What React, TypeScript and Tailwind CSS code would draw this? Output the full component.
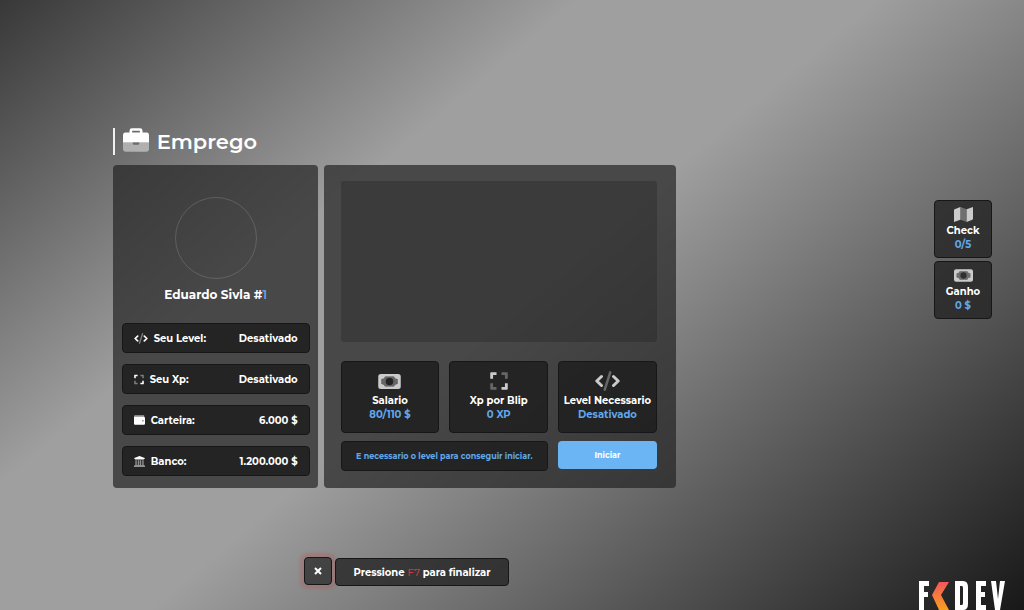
import type { ReactNode } from "react";

type IconProps = { className?: string };

function CodeIcon({ className }: IconProps) {
  return (
    <svg viewBox="0 0 640 512" className={className} aria-hidden="true">
      <path opacity=".4" stroke="currentColor" strokeWidth="64" strokeLinecap="round" d="M390 34L250 478" />
      <path fill="none" stroke="currentColor" strokeWidth="76" strokeLinecap="round" strokeLinejoin="round" d="M166 142L46 256l120 114M474 142l120 114-120 114" />
    </svg>
  );
}

function ExpandIcon({ className }: IconProps) {
  return (
    <svg viewBox="0 0 448 512" className={className} fill="currentColor" aria-hidden="true">
      <path d="M24 32h136v72H72v96H0V56a24 24 0 0 1 24-24zM448 312v144a24 24 0 0 1-24 24H288v-72h88v-96z" />
      <path opacity=".4" d="M288 32h136a24 24 0 0 1 24 24v144h-72v-96h-88zM0 312h72v96h88v72H24a24 24 0 0 1-24-24z" />
    </svg>
  );
}

function MoneyIcon({ className }: IconProps) {
  return (
    <svg viewBox="0 0 576 384" className={className} fill="currentColor" aria-hidden="true">
      <path fillRule="evenodd" d="M64 0h448a64 64 0 0 1 64 64v256a64 64 0 0 1-64 64H64a64 64 0 0 1-64-64V64A64 64 0 0 1 64 0zm112 64a96 96 0 0 1-96 64v128a96 96 0 0 1 96 64h224a96 96 0 0 1 96-64V128a96 96 0 0 1-96-64z" />
      <path opacity=".4" fillRule="evenodd" d="M176 64h224a96 96 0 0 0 96 64v128a96 96 0 0 0-96 64H176a96 96 0 0 0-96-64V128a96 96 0 0 0 96-64zm112 32a96 96 0 1 0 0 192 96 96 0 0 0 0-192z" />
    </svg>
  );
}

function WalletIcon({ className }: IconProps) {
  return (
    <svg viewBox="0 0 512 448" className={className} fill="currentColor" aria-hidden="true">
      <path opacity=".6" d="M48 0h400a32 32 0 0 1 32 32v64H0V48A48 48 0 0 1 48 0z" />
      <path fillRule="evenodd" d="M0 80h464a48 48 0 0 1 48 48v272a48 48 0 0 1-48 48H48a48 48 0 0 1-48-48zm416 152a32 32 0 1 0 0 64 32 32 0 0 0 0-64z" />
    </svg>
  );
}

function BankIcon({ className }: IconProps) {
  return (
    <svg viewBox="0 0 512 512" className={className} fill="currentColor" aria-hidden="true">
      <path d="M256 0l240 96v48h-32v24H48v-24H16V96z" />
      <path opacity=".5" d="M64 192h64v224h48V192h64v224h32V192h64v224h48V192h64v224h48v48h16v48H0v-48h16v-48h48z" />
    </svg>
  );
}

function MapIcon({ className }: IconProps) {
  return (
    <svg viewBox="0 0 576 448" className={className} fill="currentColor" aria-hidden="true">
      <path d="M0 94a32 32 0 0 1 20-30L192 0v384L22 447A16 16 0 0 1 0 432zM384 64L554 1a16 16 0 0 1 22 15v338a32 32 0 0 1-20 30l-172 64z" />
      <path opacity=".4" d="M192 0l192 64v384l-192-64z" />
    </svg>
  );
}

function BriefcaseIcon({ className }: IconProps) {
  return (
    <svg viewBox="0 0 512 464" className={className} fill="currentColor" aria-hidden="true">
      <path fillRule="evenodd" d="M128 84V48a48 48 0 0 1 48-48h160a48 48 0 0 1 48 48v36h80a48 48 0 0 1 48 48v148H0V132a48 48 0 0 1 48-48zm52 0h152V48H180z" />
      <path opacity=".45" d="M0 280h512v136a48 48 0 0 1-48 48H48a48 48 0 0 1-48-48z" />
      <path fill="#6b6b6b" d="M192 280h128v28a16 16 0 0 1-16 16h-96a16 16 0 0 1-16-16z" />
    </svg>
  );
}

function Logo() {
  return (
    <svg viewBox="0 0 88 29" className="h-[29px] w-[88px]" role="img" aria-label="FKDEV">
      <defs>
        <linearGradient id="flame" x1="0" y1="0" x2="0" y2="1">
          <stop offset="0" stopColor="#f4565a" />
          <stop offset="1" stopColor="#f6a01e" />
        </linearGradient>
      </defs>
      <g fill="#ffffff">
        <rect x="1" y="0" width="5" height="29" />
        <rect x="1" y="0" width="10" height="5" />
        <rect x="1" y="11" width="9" height="5" />
        <path fillRule="evenodd" d="M37 0h8q5 0 5 6v17q0 6-5 6h-8zm5 5v19h2q1 0 1-2V7q0-2-1-2z" />
        <path d="M58 0h10v5h-5v6h4v5h-4v8h5v5H58z" />
        <path d="M73 0h5l2 18 2-18h5l-5 29h-5z" />
      </g>
      <path fill="url(#flame)" d="M21 1h10l-8 13 8 15H21l-7-15z" />
    </svg>
  );
}

const rows = [
  { label: "Seu Level:", value: "Desativado", icon: <CodeIcon className="h-[11px] w-[14px]" /> },
  { label: "Seu Xp:", value: "Desativado", icon: <ExpandIcon className="h-[11px] w-[10px]" /> },
  { label: "Carteira:", value: "6.000 $", icon: <WalletIcon className="h-[10px] w-[11px]" /> },
  { label: "Banco:", value: "1.200.000 $", icon: <BankIcon className="h-[11px] w-[11px]" /> },
];

const cards = [
  { label: "Salario", value: "80/110 $", icon: <MoneyIcon className="h-[15px] w-[23px]" /> },
  { label: "Xp por Blip", value: "0 XP", icon: <ExpandIcon className="h-5 w-[18px]" /> },
  { label: "Level Necessario", value: "Desativado", icon: <CodeIcon className="h-5 w-[25px]" /> },
];

const box = "rounded-[4px] border border-[#171717]";

type StatProps = { label: string; value: string; icon: ReactNode; className: string; iconClassName?: string };

function Stat({ label, value, icon, className, iconClassName = "" }: StatProps) {
  return (
    <div className={`${box} flex flex-col items-center text-[10px] leading-[14px] font-bold whitespace-nowrap text-white ${className}`}>
      <div className={`flex h-5 items-center text-[#cbcbcb] ${iconClassName}`}>{icon}</div>
      <span>{label}</span>
      <span className="text-[#61a8ea]">{value}</span>
    </div>
  );
}

export default function App() {
  return (
    <div
      className="relative flex min-h-screen flex-col overflow-hidden bg-[linear-gradient(140deg,#383838_0%,#9f9f9f_33%,#9f9f9f_50%,#181818_100%)] text-white"
      style={{ fontFamily: 'Montserrat, Inter, "Liberation Sans", sans-serif' }}
    >
      <main className="ml-[11%] w-[55%] pt-32">
        <h1 className="flex h-[27px] items-center border-l-2 border-white/90 pl-2 text-[21px] leading-[25px] font-semibold">
          <BriefcaseIcon className="mr-2 h-6 w-[26px] self-start" />
          Emprego
        </h1>

        <div className="mt-[10px] flex gap-[6px]">
          <section className="w-[205px] shrink-0 rounded-[4px] bg-[#242424]/70 pt-8 pr-2 pb-3 pl-[9px]">
            <div className="mx-auto size-[82px] rounded-full border border-white/15" />
            <h2 className="mt-[6px] mb-[18px] text-center text-[12px] leading-5 font-bold">
              Eduardo Sivla #<span className="font-semibold text-[#61a8ea]">1</span>
            </h2>
            <ul className="flex flex-col gap-[11px] text-[10px] font-bold">
              {rows.map((r) => (
                <li key={r.label} className={`${box} flex h-[30px] items-center justify-between bg-[#1f1f1f]/85 px-[11px]`}>
                  <span className="flex items-center gap-[6px]">
                    {r.icon}
                    {r.label}
                  </span>
                  <span>{r.value}</span>
                </li>
              ))}
            </ul>
          </section>

          <section className="flex-1 rounded-[4px] bg-[#242424]/70 pt-4 pr-[19px] pl-[17px]">
            <div className="h-[161px] rounded-[3px] bg-[#1f1f1f]/30" />
            <div className="mt-[19px] grid grid-cols-3 gap-[10px]">
              {cards.map((c) => (
                <Stat key={c.label} {...c} className="h-[72px] bg-[#1f1f1f]/85 pt-[9px]" iconClassName="mb-[3px]" />
              ))}
            </div>
            <div className="mt-2 grid grid-cols-3 gap-[10px]">
              <p className={`${box} col-span-2 flex h-[30px] items-center justify-center bg-[#1f1f1f]/85 text-[8px] font-bold whitespace-nowrap text-[#61a8ea]`}>
                E necessario o level para conseguir iniciar.
              </p>
              <button type="button" className="h-7 cursor-pointer rounded-[4px] bg-[#6bb5f5] text-[8px] font-bold">
                Iniciar
              </button>
            </div>
          </section>
        </div>
      </main>

      <aside className="absolute top-[200px] right-8 flex w-[58px] flex-col gap-[3px]">
        <Stat label="Check" value="0/5" icon={<MapIcon className="h-[15px] w-[19px]" />} className="h-[58px] bg-[#242424]/80 pt-[3px]" />
        <Stat label="Ganho" value="0 $" icon={<MoneyIcon className="h-[13px] w-[19px]" />} className="h-[58px] bg-[#242424]/80 pt-[3px]" />
      </aside>

      <div className="mt-[69px] ml-[304px] flex items-start gap-[3px] text-[10px] font-bold">
        <button
          type="button"
          aria-label="Fechar"
          className={`${box} flex size-7 cursor-pointer items-center justify-center bg-[#242424]/70 shadow-[0_0_3px_4px_rgba(190,80,80,0.3)]`}
        >
          <svg viewBox="0 0 8 8" className="size-2" stroke="currentColor" strokeWidth="2" aria-hidden="true">
            <path d="M1 1l6 6M7 1L1 7" />
          </svg>
        </button>
        <p className={`${box} mt-px flex h-7 w-[174px] items-center justify-center bg-[#242424]/80 whitespace-pre`}>
          Pressione <span className="font-medium text-[#c33d43]">F7</span> para finalizar
        </p>
      </div>

      <div className="absolute right-[18px] bottom-0">
        <Logo />
      </div>
    </div>
  );
}
